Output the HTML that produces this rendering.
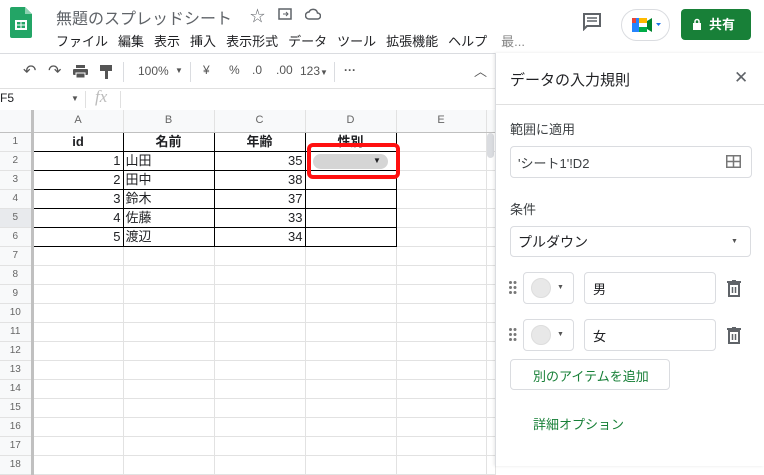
<!DOCTYPE html>
<html><head><meta charset="utf-8"><style>
*{box-sizing:border-box;margin:0;padding:0}
body{width:764px;height:466px;overflow:hidden;background:#fff;font-family:"Liberation Sans","Noto Sans CJK JP",sans-serif;position:relative;color:#202124}
.a{position:absolute}
.menu span{margin-right:10px}
.tb{color:#555;font-size:12px}
.grid td{border-right:1px solid #e2e2e2;border-bottom:1px solid #e2e2e2;height:19px;line-height:17px;font-size:13px;padding:0 2px;white-space:nowrap;overflow:hidden}
.grid{border-collapse:collapse;table-layout:fixed;position:absolute;left:0;top:110px}
.grid tr{height:19px}
.grid tr td:first-child{background:#f8f9fa;color:#666;font-size:10px;text-align:center;border-right:3px solid #c0c0c0}
.grid tr.h{height:22px}
.grid tr.h td{background:#f8f9fa;color:#666;font-size:11px;text-align:center;height:22px;border-bottom:1px solid #c0c0c0}
.b td.c{border:1px solid #000}
.r{text-align:right}.ctr{text-align:center;font-weight:bold}
.box{position:absolute;border:1px solid #dadce0;border-radius:4px;background:#fff}
</style></head><body>
<svg class="a" style="left:10px;top:7px" width="22" height="31" viewBox="0 0 22 31"><path d="M0 2a2 2 0 0 1 2-2h13l7 7v22a2 2 0 0 1-2 2H2a2 2 0 0 1-2-2z" fill="#23a566"/><path d="M15 0v7h7z" fill="#8ed1b1"/><rect x="5" y="13" width="12" height="10" fill="#fff"/><path d="M7 15h3.5v2.5H7zM11.5 15H15v2.5h-3.5zM7 18.5h3.5V21H7zM11.5 18.5H15V21h-3.5z" fill="#23a566"/></svg>
<div class="a" style="left:56px;top:5px;font-size:16px;color:#5f6368">無題のスプレッドシート</div>
<div class="a" style="left:250px;top:5px;font-size:15px;color:#5f6368">☆</div>
<svg class="a" style="left:278px;top:8px" width="14" height="12"><rect x="1" y="1" width="12" height="10" fill="none" stroke="#5f6368" stroke-width="1.5"/><path d="M5 6h5M8 4l2 2-2 2" stroke="#5f6368" fill="none"/></svg>
<svg class="a" style="left:305px;top:8px" width="16" height="12"><path d="M4 11a3.5 3.5 0 0 1 0-7 4.5 4.5 0 0 1 8.5 1 3 3 0 0 1 0 6z" fill="none" stroke="#5f6368" stroke-width="1.5"/></svg>
<div class="a menu" style="left:56px;top:31px;font-size:13px;color:#202124;white-space:nowrap"><span>ファイル</span><span>編集</span><span>表示</span><span>挿入</span><span>表示形式</span><span>データ</span><span>ツール</span><span>拡張機能</span><span>ヘルプ</span><span style="color:#888;margin-left:4px">最...</span></div>
<svg class="a" style="left:583px;top:13px" width="18" height="18"><path d="M1 1h16v12H4l-3 3z" fill="none" stroke="#5f6368" stroke-width="2"/><path d="M4 5h10M4 8h10" stroke="#5f6368" stroke-width="1.5"/></svg>
<div class="a" style="left:621px;top:9px;width:49px;height:32px;border:1px solid #dadce0;border-radius:16px"></div>
<svg class="a" style="left:632px;top:17px" width="30" height="16"><rect x="0" y="1" width="7" height="14" fill="#2684fc"/><rect x="7" y="1" width="8" height="5" fill="#ffba00"/><rect x="7" y="10" width="8" height="5" fill="#00ac47"/><rect x="0" y="1" width="4" height="5" fill="#ea4335"/><path d="M15 4l5-3v14l-5-3z" fill="#00832d"/><path d="M24 6h5l-2.5 3z" fill="#1a73e8"/></svg>
<div class="a" style="left:681px;top:9px;width:70px;height:31px;background:#188038;border-radius:4px;color:#fff;font-size:13px;font-weight:bold;line-height:31px;padding-left:28px">共有</div>
<svg class="a" style="left:692px;top:18px" width="10" height="12"><rect x="1" y="5" width="8" height="7" fill="#fff"/><path d="M3 5V3.5a2 2 0 0 1 4 0V5" stroke="#fff" stroke-width="1.5" fill="none"/></svg>
<div class="a" style="left:0;top:53px;width:764px;border-top:1px solid #dadce0"></div>
<div class="a tb" style="left:0;top:55px;width:495px;height:33px">
<div class="a" style="left:23px;top:6px;font-size:16px">↶</div>
<div class="a" style="left:48px;top:6px;font-size:16px">↷</div>
<svg class="a" style="left:73px;top:10px" width="15" height="14"><rect x="3" y="0" width="9" height="3" fill="#555"/><rect x="0" y="4" width="15" height="6" rx="1" fill="#555"/><rect x="3" y="8" width="9" height="5" fill="#555" stroke="#fff"/></svg>
<svg class="a" style="left:100px;top:10px" width="13" height="15"><rect x="0" y="0" width="12" height="6" fill="#555"/><rect x="5" y="6" width="3" height="8" fill="#555"/></svg>
<div class="a" style="left:123px;top:7px;height:20px;border-left:1px solid #dadce0"></div>
<div class="a" style="left:138px;top:9px">100%</div><div class="a" style="left:175px;top:11px;font-size:8px">▼</div>
<div class="a" style="left:190px;top:7px;height:20px;border-left:1px solid #dadce0"></div>
<div class="a" style="left:203px;top:8px">¥</div><div class="a" style="left:229px;top:8px">%</div>
<div class="a" style="left:252px;top:8px">.0</div><div class="a" style="left:276px;top:8px">.00</div>
<div class="a" style="left:300px;top:9px">123<span style="font-size:8px">▼</span></div>
<div class="a" style="left:334px;top:7px;height:20px;border-left:1px solid #dadce0"></div>
<div class="a" style="left:344px;top:8px;font-weight:bold">···</div>
<div class="a" style="left:474px;top:6px;font-size:13px">︿</div>
</div>
<div class="a" style="left:0;top:88px;width:495px;border-top:1px solid #e0e0e0"></div>
<div class="a" style="left:0;top:91px;font-size:12px">F5</div>
<div class="a" style="left:71px;top:94px;font-size:8px;color:#555">▼</div>
<div class="a" style="left:85px;top:91px;height:17px;border-left:1px solid #e0e0e0"></div>
<div class="a" style="left:95px;top:87px;font-size:17px;font-style:italic;color:#bbb;font-family:'Liberation Serif',serif">fx</div>
<div class="a" style="left:120px;top:91px;height:17px;border-left:1px solid #e0e0e0"></div>
<table class="grid">
<colgroup><col style="width:32px"><col style="width:91px"><col style="width:91px"><col style="width:91px"><col style="width:91px"><col style="width:90px"><col style="width:9px"></colgroup>
<tr class="h"><td></td><td>A</td><td>B</td><td>C</td><td>D</td><td>E</td><td></td></tr>
<tr class="b"><td>1</td><td class="c ctr">id</td><td class="c ctr">名前</td><td class="c ctr">年齢</td><td class="c ctr">性別</td><td></td><td></td></tr>
<tr class="b"><td>2</td><td class="c r">1</td><td class="c">山田</td><td class="c r">35</td><td class="c"></td><td></td><td></td></tr>
<tr class="b"><td>3</td><td class="c r">2</td><td class="c">田中</td><td class="c r">38</td><td class="c"></td><td></td><td></td></tr>
<tr class="b"><td>4</td><td class="c r">3</td><td class="c">鈴木</td><td class="c r">37</td><td class="c"></td><td></td><td></td></tr>
<tr class="b"><td style="background:#e8eaed">5</td><td class="c r">4</td><td class="c">佐藤</td><td class="c r">33</td><td class="c"></td><td></td><td></td></tr>
<tr class="b"><td>6</td><td class="c r">5</td><td class="c">渡辺</td><td class="c r">34</td><td class="c"></td><td></td><td></td></tr>
<tr><td>7</td><td></td><td></td><td></td><td></td><td></td><td></td></tr>
<tr><td>8</td><td></td><td></td><td></td><td></td><td></td><td></td></tr>
<tr><td>9</td><td></td><td></td><td></td><td></td><td></td><td></td></tr>
<tr><td>10</td><td></td><td></td><td></td><td></td><td></td><td></td></tr>
<tr><td>11</td><td></td><td></td><td></td><td></td><td></td><td></td></tr>
<tr><td>12</td><td></td><td></td><td></td><td></td><td></td><td></td></tr>
<tr><td>13</td><td></td><td></td><td></td><td></td><td></td><td></td></tr>
<tr><td>14</td><td></td><td></td><td></td><td></td><td></td><td></td></tr>
<tr><td>15</td><td></td><td></td><td></td><td></td><td></td><td></td></tr>
<tr><td>16</td><td></td><td></td><td></td><td></td><td></td><td></td></tr>
<tr><td>17</td><td></td><td></td><td></td><td></td><td></td><td></td></tr>
<tr><td>18</td><td></td><td></td><td></td><td></td><td></td><td></td></tr>
</table>
<div class="a" style="left:487px;top:133px;width:7px;height:25px;background:#dadce0;border-radius:4px"></div>
<div class="a" style="left:313px;top:154px;width:75px;height:15px;background:#d5d5d5;border-radius:8px"></div>
<div class="a" style="left:373px;top:156px;font-size:8px">▼</div>
<div class="a" style="left:307px;top:143px;width:93px;height:36px;border:4px solid #ff1010;border-radius:6px"></div>
<div class="a" style="left:495px;top:53px;width:269px;height:413px;background:#fff;border-left:1px solid #dadce0;box-shadow:-1px 0 3px rgba(0,0,0,.1)"></div>
<div class="a" style="left:510px;top:69px;font-size:15px">データの入力規則</div>
<div class="a" style="left:734px;top:68px;font-size:17px;color:#5f6368">✕</div>
<div class="a" style="left:496px;top:104px;width:268px;border-top:1px solid #e0e0e0"></div>
<div class="a" style="left:510px;top:119px;font-size:13px;color:#3c4043">範囲に適用</div>
<div class="box" style="left:510px;top:146px;width:242px;height:32px"></div>
<div class="a" style="left:518px;top:153px;font-size:13px;color:#3c4043">'シート1'!D2</div>
<svg class="a" style="left:726px;top:155px" width="15" height="13"><rect x=".75" y=".75" width="13.5" height="11.5" fill="none" stroke="#777" stroke-width="1.5"/><path d="M7.5 0v13M0 6.5h15" stroke="#777" stroke-width="1.5"/></svg>
<div class="a" style="left:510px;top:199px;font-size:13px;color:#3c4043">条件</div>
<div class="box" style="left:510px;top:226px;width:241px;height:31px"></div>
<div class="a" style="left:518px;top:232px;font-size:14px">プルダウン</div>
<div class="a" style="left:731px;top:238px;font-size:7px;color:#555">▼</div>
<svg class="a" style="left:509px;top:281px" width="8" height="14" fill="#777"><circle cx="1.5" cy="1.5" r="1.5"/><circle cx="6" cy="1.5" r="1.5"/><circle cx="1.5" cy="6.5" r="1.5"/><circle cx="6" cy="6.5" r="1.5"/><circle cx="1.5" cy="11.5" r="1.5"/><circle cx="6" cy="11.5" r="1.5"/></svg>
<div class="box" style="left:523px;top:272px;width:51px;height:32px"></div>
<div class="a" style="left:531px;top:278px;width:20px;height:20px;border-radius:50%;background:#e8e8e8;border:1px solid #ddd"></div>
<div class="a" style="left:557px;top:284px;font-size:7px;color:#555">▼</div>
<div class="box" style="left:584px;top:272px;width:132px;height:32px"></div>
<div class="a" style="left:593px;top:279px;font-size:13px">男</div>
<svg class="a" style="left:727px;top:280px" width="14" height="17"><path d="M0 2h14M5 0h4M2 4h10v12H2z" fill="none" stroke="#5f6368" stroke-width="2"/><path d="M5.5 7v6M8.5 7v6" stroke="#5f6368" stroke-width="1.5"/></svg>
<svg class="a" style="left:509px;top:328px" width="8" height="14" fill="#777"><circle cx="1.5" cy="1.5" r="1.5"/><circle cx="6" cy="1.5" r="1.5"/><circle cx="1.5" cy="6.5" r="1.5"/><circle cx="6" cy="6.5" r="1.5"/><circle cx="1.5" cy="11.5" r="1.5"/><circle cx="6" cy="11.5" r="1.5"/></svg>
<div class="box" style="left:523px;top:319px;width:51px;height:32px"></div>
<div class="a" style="left:531px;top:325px;width:20px;height:20px;border-radius:50%;background:#e8e8e8;border:1px solid #ddd"></div>
<div class="a" style="left:557px;top:331px;font-size:7px;color:#555">▼</div>
<div class="box" style="left:584px;top:319px;width:132px;height:32px"></div>
<div class="a" style="left:593px;top:326px;font-size:13px">女</div>
<svg class="a" style="left:727px;top:327px" width="14" height="17"><path d="M0 2h14M5 0h4M2 4h10v12H2z" fill="none" stroke="#5f6368" stroke-width="2"/><path d="M5.5 7v6M8.5 7v6" stroke="#5f6368" stroke-width="1.5"/></svg>
<div class="box" style="left:510px;top:359px;width:160px;height:31px"></div>
<div class="a" style="left:533px;top:366px;font-size:13px;color:#188038">別のアイテムを追加</div>
<div class="a" style="left:533px;top:414px;font-size:13px;color:#188038">詳細オプション</div>
</body></html>
